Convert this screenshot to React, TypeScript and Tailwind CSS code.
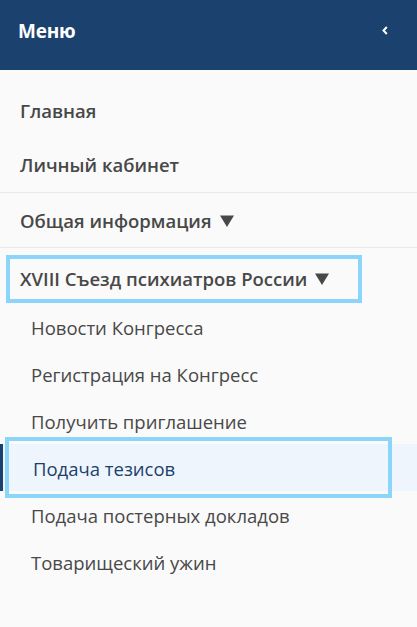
import React from "react";

const Tri = () => (
  <svg width="14" height="12" viewBox="0 0 14 12" className="ml-[8px] shrink-0">
    <polygon points="0,0.5 14,0.5 7,12" fill="#484848" />
  </svg>
);

const subItems = [
  "Новости Конгресса",
  "Регистрация на Конгресс",
  "Получить приглашение",
  "Подача тезисов",
  "Подача постерных докладов",
  "Товарищеский ужин",
];

export default function App() {
  return (
    <div
      className="w-[417px] h-[627px] bg-[#fafafa] overflow-hidden text-[#484848]"
      style={{ fontFamily: '"Open Sans", "Noto Sans", sans-serif' }}
    >
      <div className="h-[70px] bg-[#1b416f] flex items-center justify-between pl-[18px] pr-[29px] pb-[7px]">
        <span className="text-white text-[19px] font-bold tracking-[-0.2px]">Меню</span>
        <svg width="6" height="9" viewBox="0 0 6 9" className="mt-[-3px]">
          <polyline points="4.8,1 1.5,4.5 4.8,8" fill="none" stroke="#fff" strokeWidth="2" />
        </svg>
      </div>

      <nav className="pt-[13px]">
        <div className="h-[55px] flex items-center pl-[20px] text-[18.5px] font-semibold">Главная</div>
        <div className="h-[55px] flex items-center pl-[20px] text-[18.5px] font-semibold border-b border-[#e9e9e9]">
          Личный кабинет
        </div>
        <div className="h-[55px] flex items-center pl-[20px] pt-[2px] text-[18.5px] font-semibold border-b border-[#e9e9e9]">
          Общая информация
          <Tri />
        </div>
        <div className="h-[55px] pt-[7px] pl-[6px]">
          <div className="h-[48px] w-[356px] border-4 border-[#8bd5fa] flex items-center pl-[10px] text-[18.5px] font-semibold">
            XVIII Съезд психиатров России
            <Tri />
          </div>
        </div>

        {subItems.map((t) =>
          t === "Подача тезисов" ? (
            <div key={t} className="h-[47px] bg-[#eef5fd] border-l-[3px] border-[#1b416f] flex">
              <div className="ml-[9px] w-[373px] h-full flex items-center pl-[21px] pt-[3px] text-[18.5px] text-[#1d3f6b] bg-[#eef5fd] outline-4 outline-offset-[3px] outline-[#8bd5fa]">
                {t}
              </div>
            </div>
          ) : (
            <div key={t} className="h-[47px] flex items-center pl-[31px] pt-[3px] text-[18.5px]">
              {t}
            </div>
          )
        )}
      </nav>
    </div>
  );
}
